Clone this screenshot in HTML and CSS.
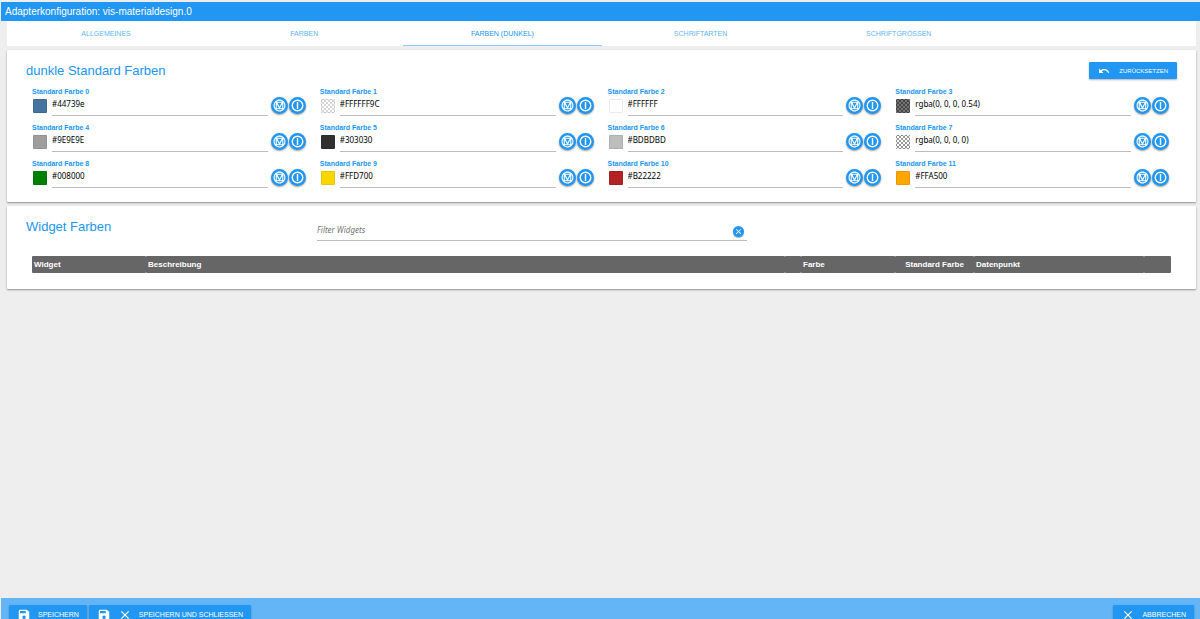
FILE: index.html
```
<!DOCTYPE html>
<html lang="de">
<head>
<meta charset="utf-8">
<meta name="viewport" content="width=device-width, initial-scale=1">
<title>Adapterkonfiguration: vis-materialdesign.0</title>
<link rel="stylesheet" href="styles.css">
</head>
<body>
<svg class="sprite" aria-hidden="true">
  <symbol id="i-material" viewBox="0 0 24 24"><path d="M21,12C21,9.97 20.33,8.09 19,6.38V17.63C20.33,15.97 21,14.09 21,12M17.63,19H6.38C7.06,19.55 7.95,20 9.05,20.41C10.14,20.8 11.13,21 12,21C12.88,21 13.86,20.8 14.95,20.41C16.05,20 16.95,19.55 17.63,19M11,17L7,9V17H11M17,9L13,17H17V9M12,14.53L15.75,7H8.25L12,14.53M17.63,5C15.97,3.67 14.09,3 12,3C9.91,3 8.03,3.67 6.38,5H17.63M5,17.63V6.38C3.67,8.09 3,9.97 3,12C3,14.09 3.67,15.97 5,17.63M23,12C23,15.03 21.94,17.63 19.78,19.78C17.63,21.94 15.03,23 12,23C8.97,23 6.38,21.94 4.22,19.78C2.06,17.63 1,15.03 1,12C1,8.97 2.06,6.38 4.22,4.22C6.38,2.06 8.97,1 12,1C15.03,1 17.63,2.06 19.78,4.22C21.94,6.38 23,8.97 23,12Z"/></symbol>
  <symbol id="i-iobroker" viewBox="0 0 24 24"><circle cx="12" cy="12" r="9.700" fill="none" stroke="currentColor" stroke-width="2.600"/><path d="M10.700 5.500h2.600v13h-2.600z"/></symbol>
  <symbol id="i-undo" viewBox="0 0 24 24"><path d="M12.5 8c-2.650 0-5.050.99-6.900 2.600L2 7v9h9l-3.620-3.620c1.390-1.160 3.160-1.880 5.120-1.880 3.540 0 6.550 2.310 7.600 5.500l2.370-.78C21.080 11.030 17.150 8 12.500 8z"/></symbol>
  <symbol id="i-save" viewBox="0 0 24 24"><path fill-rule="evenodd" d="M17 3H5a2 2 0 0 0-2 2v14a2 2 0 0 0 2 2h14a2 2 0 0 0 2-2V7zM5 5h10v4H5zM12 13a3 3 0 1 1 0 6 3 3 0 0 1 0-6z"/></symbol>
  <symbol id="i-close" viewBox="0 0 24 24"><path d="M19 6.410L17.590 5 12 10.590 6.410 5 5 6.410 10.590 12 5 17.590 6.410 19 12 13.410 17.590 19 19 17.590 13.410 12z"/></symbol>
</svg>

<header class="titlebar">Adapterkonfiguration: vis-materialdesign.0</header>

<main class="content">
  <nav class="tabs">
    <a class="tab" href="#allgemeines">ALLGEMEINES</a>
    <a class="tab" href="#farben">FARBEN</a>
    <a class="tab tab-active" href="#farben-dunkel" aria-current="page">FARBEN (DUNKEL)</a>
    <a class="tab" href="#schriftarten">SCHRIFTARTEN</a>
    <a class="tab" href="#schriftgroessen">SCHRIFTGRÖSSEN</a>
  </nav>

  <section class="card">
    <div class="card-head">
      <h2 class="card-title">dunkle Standard Farben</h2>
      <button class="btn btn-reset" type="button"><svg class="icon"><use href="#i-undo"/></svg>ZURÜCKSETZEN</button>
    </div>
    <div class="colors" id="colors"></div>
  </section>

  <section class="card card-widgets">
    <div class="filter-head">
      <h2 class="card-title">Widget Farben</h2>
      <div class="filter">
        <input class="filter-input" type="text" placeholder="Filter Widgets" aria-label="Filter Widgets">
        <button class="filter-clear" type="button" aria-label="Filter löschen"><svg class="icon-clear"><use href="#i-close"/></svg></button>
      </div>
    </div>
    <table class="widgets">
      <colgroup><col class="c-widget"><col><col class="c-preview"><col class="c-color"><col class="c-default"><col class="c-data"><col class="c-action"></colgroup>
      <thead>
        <tr><th>Widget</th><th>Beschreibung</th><th></th><th>Farbe</th><th class="th-center">Standard Farbe</th><th>Datenpunkt</th><th></th></tr>
      </thead>
    </table>
  </section>
</main>

<footer class="actions">
  <button class="btn btn-action" type="button"><svg class="icon-large"><use href="#i-save"/></svg>SPEICHERN</button>
  <button class="btn btn-action" type="button"><svg class="icon-large"><use href="#i-save"/></svg><svg class="icon-large"><use href="#i-close"/></svg>SPEICHERN UND SCHLIESSEN</button>
  <button class="btn btn-action btn-cancel" type="button"><svg class="icon-large"><use href="#i-close"/></svg>ABBRECHEN</button>
</footer>
<script src="script.js"></script>
</body>
</html>
```
FILE: styles.css
```
* { box-sizing: border-box; }

body {
  margin: 0;
  height: 100vh;
  overflow: hidden;
  display: flex;
  flex-direction: column;
  padding: 2px 0 0 1px;
  background: #eee;
  font-family: "Liberation Sans", Arial, sans-serif;
  color: #222;
}

button, input { font: inherit; margin: 0; }
button { cursor: pointer; }
svg { fill: currentColor; flex: none; }
.sprite { display: none; }

.titlebar {
  flex: none;
  padding: 0 4px;
  background: #2196f3;
  color: #fff;
  font-size: 10px;
  line-height: 19px;
}

.content { flex: 1; min-height: 0; padding: 0 4px 0 6px; }

.tabs {
  display: grid;
  grid-template-columns: repeat(6, 1fr);
  background: #fff;
  margin-bottom: 4px;
}
.tab {
  height: 25px;
  border-bottom: 1px solid transparent;
  color: #64b5f6;
  font-size: 7px;
  line-height: 25px;
  text-align: center;
  text-decoration: none;
}
.tab-active { color: #2196f3; border-bottom-color: #90caf9; }

.card {
  background: #fff;
  border-radius: 1px;
  box-shadow: 0 1px 2px rgba(0, 0, 0, .4);
  padding: 12px 0 7px;
  margin-bottom: 4px;
}
.card-head {
  display: flex;
  justify-content: space-between;
  align-items: center;
  padding: 0 19px;
  margin-bottom: 8px;
}
.card-title {
  margin: 0;
  color: #2196f3;
  font-size: 13px;
  font-weight: 400;
  line-height: 17px;
}

.btn {
  display: flex;
  align-items: center;
  border: 0;
  border-radius: 1px;
  background: #2196f3;
  color: #fff;
  font-size: 7px;
  box-shadow: 0 1px 2px rgba(0, 0, 0, .3);
}
.btn-reset { height: 17px; padding: 0 9px; gap: 9px; font-size: 6px; }
.icon { width: 12px; height: 12px; }

.colors {
  display: grid;
  grid-template-columns: repeat(4, 1fr);
  padding: 0 13px 0 25px;
}
.field { padding: 0 14px 7px 0; }
.field-label {
  display: block;
  color: #2196f3;
  font-size: 7px;
  font-weight: 700;
  line-height: 9px;
}
.field-row { display: flex; align-items: flex-start; height: 20px; }
.swatch {
  flex: none;
  width: 14px;
  height: 14px;
  padding: 0;
  margin: 3px 5px 0 1px;
  border: 1px solid rgba(0, 0, 0, .08);
  border-radius: 1px;
  background: linear-gradient(var(--c), var(--c)), repeating-conic-gradient(#999 0 25%, #fff 0 50%) 0 0 / 4px 4px;
}
.field-input {
  flex: 1;
  min-width: 0;
  height: 20px;
  padding: 0 0 5px;
  margin-right: 2px;
  border: 0;
  border-bottom: 1px solid #bdbdbd;
  background: none;
  color: #000;
  font-family: "Noto Sans", sans-serif;
  font-size: 8px;
}
.round {
  flex: none;
  display: grid;
  place-items: center;
  width: 17px;
  height: 17px;
  padding: 0;
  margin: 1px 0 0 1px;
  border: 0;
  border-radius: 50%;
  background: #2196f3;
  color: #fff;
  box-shadow: 0 1px 2px rgba(0, 0, 0, .4);
}
.icon-round { width: 13px; height: 13px; }

.card-widgets { padding-bottom: 16px; }
.filter-head {
  display: grid;
  grid-template-columns: 291px minmax(0, 430px);
  align-items: start;
  padding: 0 19px;
  margin-bottom: 15px;
}
.filter-input {
  display: block;
  width: 100%;
  height: 23px;
  padding: 0 20px 0 0;
  border: 0;
  border-bottom: 1px solid #bdbdbd;
  background: none;
  font-family: "Noto Sans", sans-serif;
  font-size: 8px;
  font-style: italic;
}
.filter { position: relative; }
.filter-input::placeholder { color: #757575; opacity: 1; }
.filter-clear {
  position: absolute;
  top: 8px;
  right: 3px;
  display: grid;
  place-items: center;
  width: 11px;
  height: 11px;
  padding: 0;
  border: 0;
  border-radius: 50%;
  background: #2196f3;
  color: #fff;
  box-shadow: 0 1px 1px rgba(0, 0, 0, .3);
}
.icon-clear { width: 9px; height: 9px; }

.widgets {
  width: calc(100% - 50px);
  margin: 0 25px;
  border-collapse: separate;
  border-spacing: 0;
  table-layout: fixed;
}
.widgets th {
  height: 17px;
  padding: 0 2px;
  border-radius: 1px;
  background: #666;
  color: #fff;
  font-size: 8px;
  line-height: 17px;
  text-align: left;
  white-space: nowrap;
}
.widgets .th-center { text-align: center; }
.c-widget { width: 114px; }
.c-preview { width: 16px; }
.c-color { width: 94px; }
.c-default { width: 79px; }
.c-data { width: 170px; }
.c-action { width: 27px; }

.actions {
  flex: none;
  display: flex;
  align-items: flex-start;
  gap: 2px;
  height: 21px;
  padding: 7px 6px 0 8px;
  background: #64b5f6;
}
.btn-action { flex: none; height: 19px; padding: 0 8px; gap: 7px; }
.btn-cancel { margin-left: auto; }
.icon-large { width: 14px; height: 14px; }
```
FILE: script.js
```
const colors = ['#44739e', '#FFFFFF9C', '#FFFFFF', 'rgba(0, 0, 0, 0.54)', '#9E9E9E', '#303030', '#BDBDBD', 'rgba(0, 0, 0, 0)', '#008000', '#FFD700', '#B22222', '#FFA500'];

document.getElementById('colors').innerHTML = colors.map((c, i) => `
  <div class="field">
    <label class="field-label" for="color${i}">Standard Farbe ${i}</label>
    <div class="field-row">
      <button class="swatch" type="button" style="--c: ${c}" aria-label="Farbe ${i} wählen"></button>
      <input class="field-input" id="color${i}" type="text" value="${c}">
      <button class="round" type="button" aria-label="Material Farbe"><svg class="icon-round"><use href="#i-material"/></svg></button>
      <button class="round" type="button" aria-label="ioBroker Farbe"><svg class="icon-round"><use href="#i-iobroker"/></svg></button>
    </div>
  </div>`).join('');
```
